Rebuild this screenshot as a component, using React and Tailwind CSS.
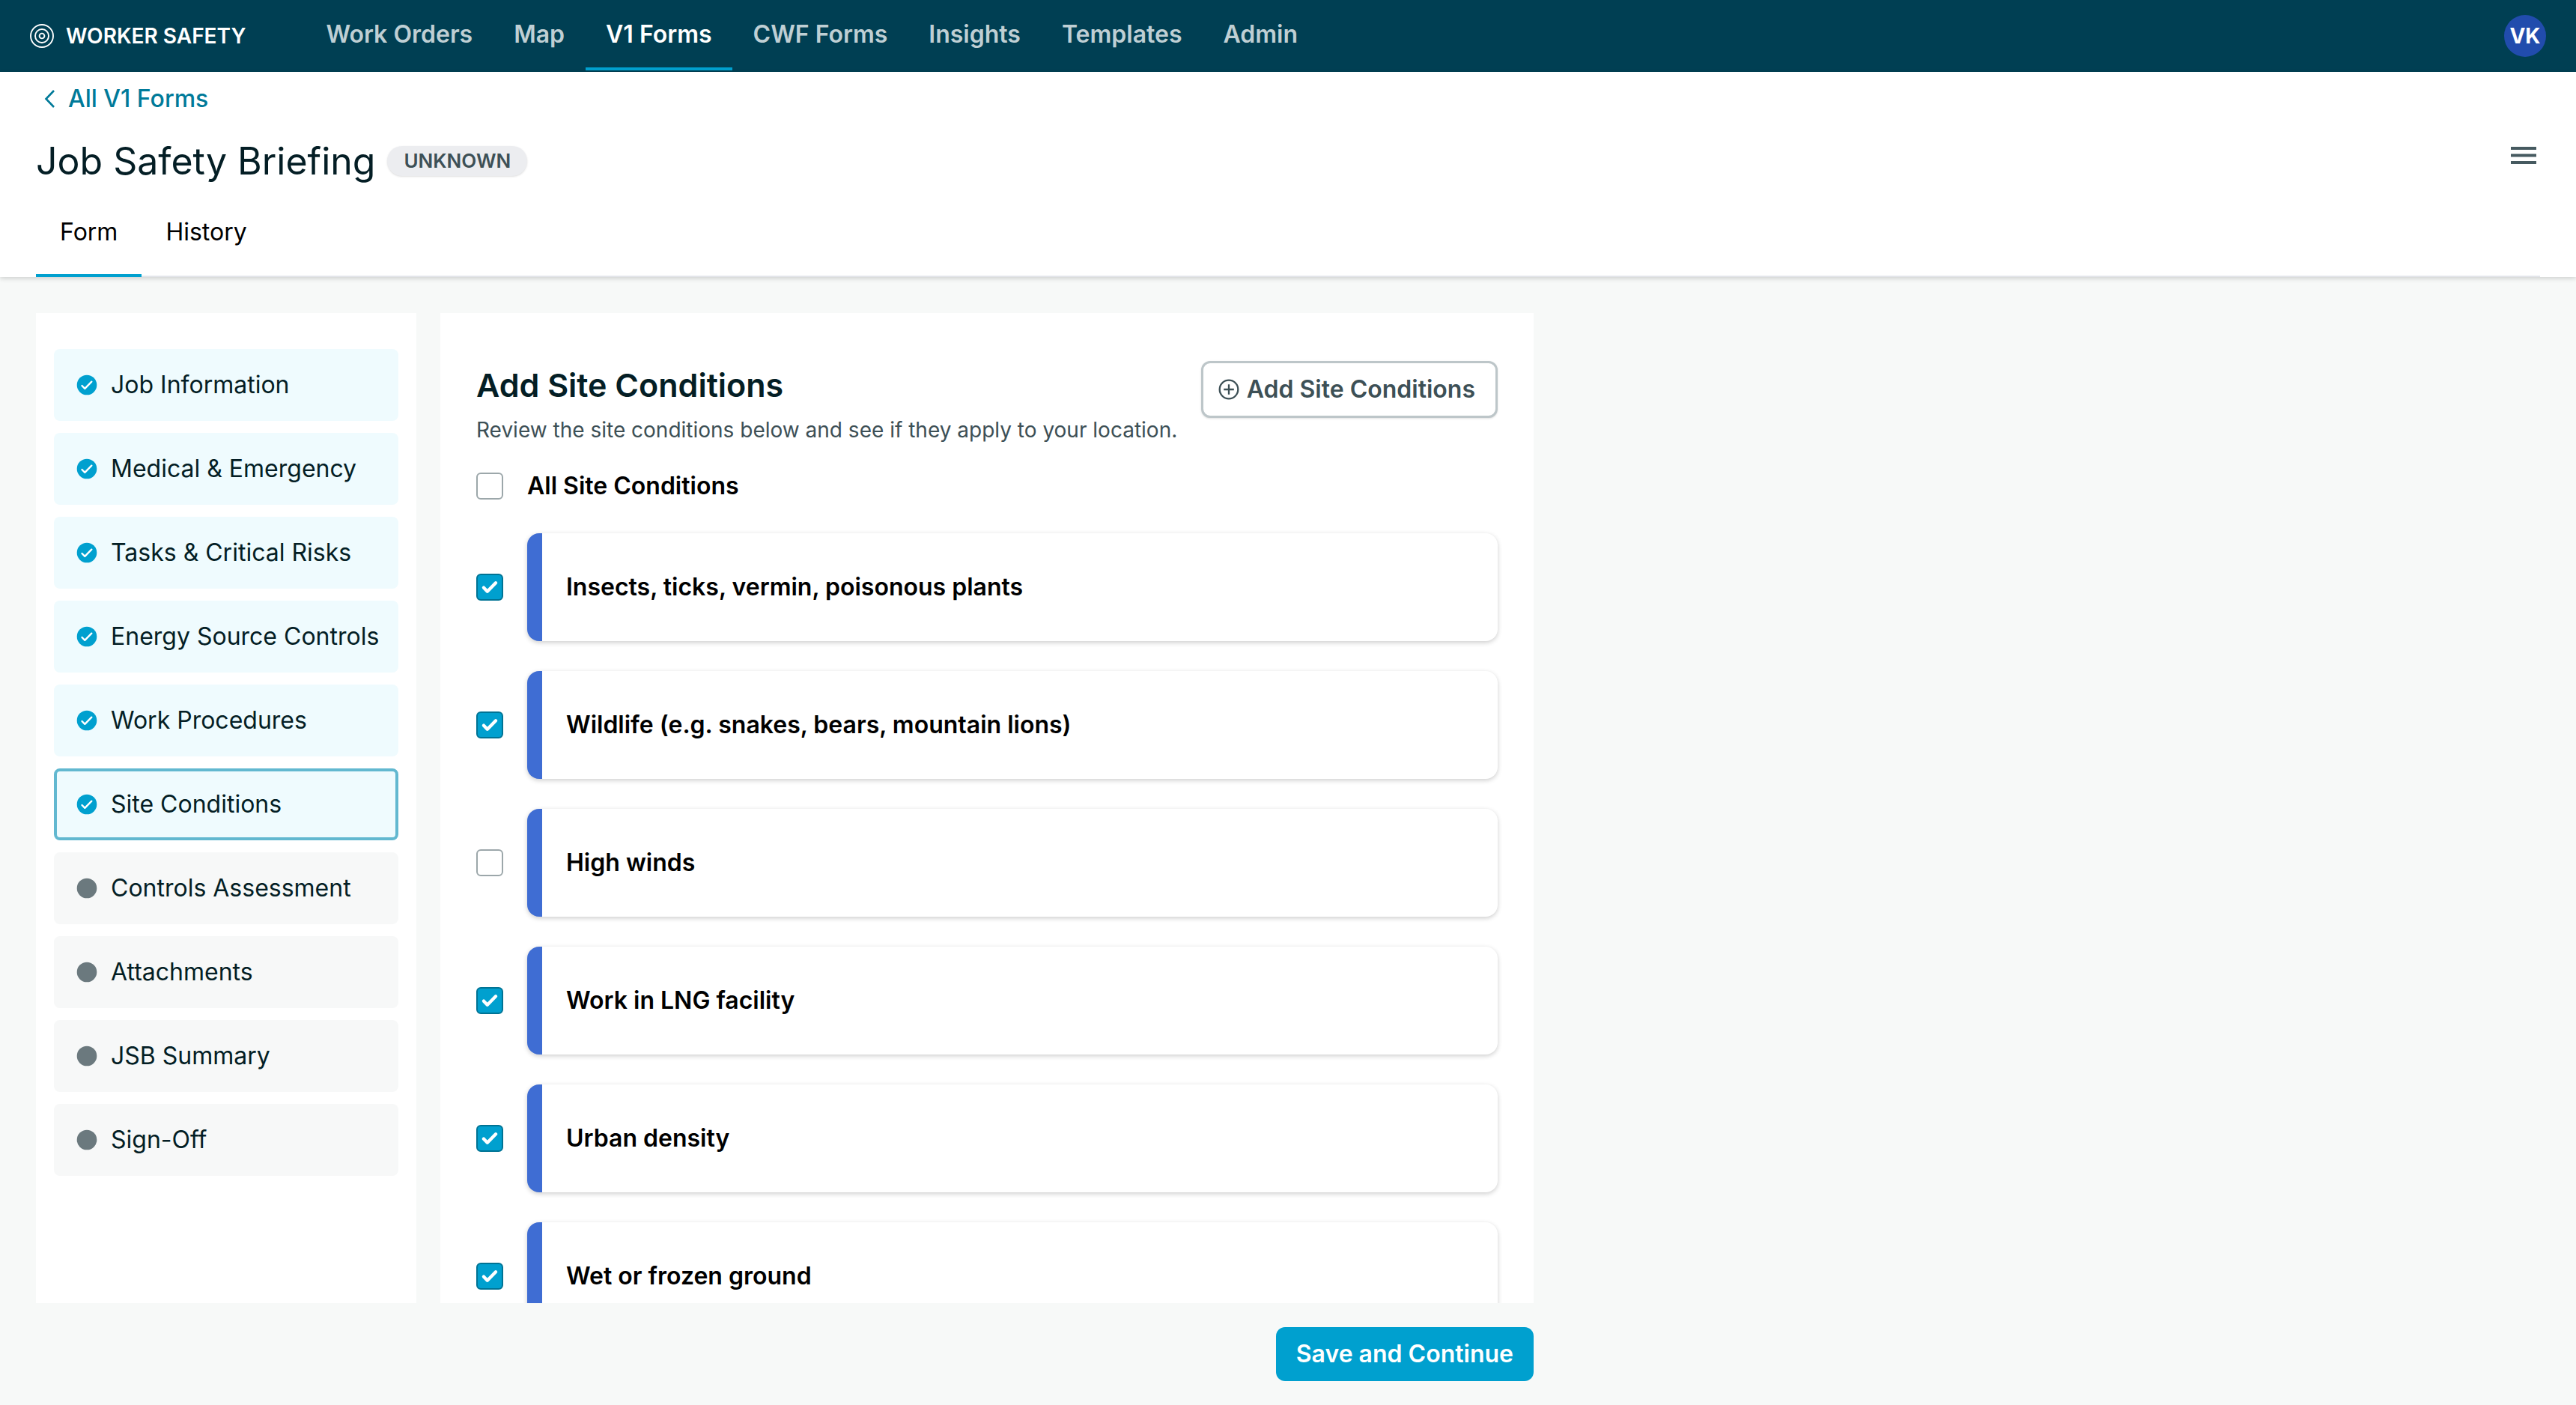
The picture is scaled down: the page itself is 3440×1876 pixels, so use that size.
import { useState } from "react";

const navItems = ["Work Orders", "Map", "V1 Forms", "CWF Forms", "Insights", "Templates", "Admin"];

const steps = [
  { label: "Job Information", done: true },
  { label: "Medical & Emergency", done: true },
  { label: "Tasks & Critical Risks", done: true },
  { label: "Energy Source Controls", done: true },
  { label: "Work Procedures", done: true },
  { label: "Site Conditions", done: true },
  { label: "Controls Assessment", done: false },
  { label: "Attachments", done: false },
  { label: "JSB Summary", done: false },
  { label: "Sign-Off", done: false },
];

const initialConditions = [
  { label: "Insects, ticks, vermin, poisonous plants", checked: true },
  { label: "Wildlife (e.g. snakes, bears, mountain lions)", checked: true },
  { label: "High winds", checked: false },
  { label: "Work in LNG facility", checked: true },
  { label: "Urban density", checked: true },
  { label: "Wet or frozen ground", checked: true },
];

function LogoIcon() {
  return (
    <svg viewBox="0 0 32 32" className="size-8" fill="none" stroke="currentColor" strokeWidth="1.9" aria-hidden="true">
      <circle cx="16" cy="16" r="15" />
      <circle cx="16" cy="16" r="9" />
      <circle cx="16" cy="16" r="3.400" />
    </svg>
  );
}

function StepIcon({ done }) {
  return (
    <svg viewBox="0 0 28 28" className="size-7 shrink-0" aria-hidden="true">
      <circle cx="14" cy="14" r="13.300" fill={done ? "#00A0CF" : "#6B797E"} />
      {done && (
        <path d="M7.500 15l3.800 3.800L20.300 9.700" fill="none" stroke="#fff" strokeWidth="2.400" strokeLinecap="round" strokeLinejoin="round" />
      )}
    </svg>
  );
}

function CheckBox({ id, checked, onChange }) {
  return (
    <span className="relative flex size-9 shrink-0">
      <input
        id={id}
        type="checkbox"
        checked={checked}
        onChange={onChange}
        className="peer size-9 cursor-pointer appearance-none rounded-[6px] border-2 border-[#9CA7AA] bg-white checked:border-[#007394] checked:bg-[#00A0CF]"
      />
      <svg
        viewBox="0 0 36 36"
        className="pointer-events-none absolute inset-0 hidden size-9 peer-checked:block"
        fill="none"
        stroke="#fff"
        strokeWidth="4.400"
        strokeLinecap="round"
        strokeLinejoin="round"
        aria-hidden="true"
      >
        <path d="M10 18.700l4.800 5L26 12.300" />
      </svg>
    </span>
  );
}

function Header() {
  return (
    <header className="flex h-24 shrink-0 items-center justify-between bg-[#003F53] px-10 text-white">
      <div className="flex h-full items-center">
        <a href="#home" className="flex items-center gap-4 text-[28px] leading-9 font-semibold">
          <LogoIcon />
          WORKER SAFETY
        </a>
        <nav className="ml-20 flex h-full gap-px">
          {navItems.map((item) => {
            const active = item === "V1 Forms";
            return (
              <a
                key={item}
                href="#nav"
                aria-current={active ? "page" : undefined}
                className={
                  active
                    ? "mb-0.5 flex items-center border-b-4 border-[#00A0CF] px-[27px] pt-0.5 text-[32px] leading-10 font-semibold"
                    : "mb-0.5 flex items-center border-b-4 border-transparent px-[27px] pt-0.5 text-[32px] leading-10 font-semibold text-[#BFCFD4]"
                }
              >
                {item}
              </a>
            );
          })}
        </nav>
      </div>
      <button type="button" className="flex size-14 items-center justify-center rounded-full bg-[#214CAD] text-[28px] font-bold">
        VK
      </button>
    </header>
  );
}

function PageHead() {
  return (
    <section className="z-10 shrink-0 bg-white px-12 shadow-[0_2px_6px_rgba(0,0,0,0.16)]">
      <a href="#forms" className="flex h-[72px] items-center gap-[18px] pl-[11px] text-[32px] leading-10 font-medium text-[#007A99]">
        <svg viewBox="0 0 14 24" className="h-6 w-3.5" fill="none" stroke="currentColor" strokeWidth="2.600" aria-hidden="true">
          <path d="M13 1L2.500 12l10.500 11" />
        </svg>
        All V1 Forms
      </a>
      <div className="flex h-[94px] items-center justify-between">
        <div className="flex items-center gap-4">
          <h1 className="text-[50px] leading-[72px] text-[#041E25]">Job Safety Briefing</h1>
          <span className="rounded-full bg-[#ECEDF0] px-[22px] py-1 text-[26px] leading-8 font-semibold text-[#3D5056] shadow-sm">UNKNOWN</span>
        </div>
        <button type="button" aria-label="Menu" className="mb-4 flex size-11 items-center justify-center text-[#465A60]">
          <svg viewBox="0 0 34 23" className="h-[23px] w-[34px]" fill="currentColor" aria-hidden="true">
            <path d="M0 0h34v4H0zM0 9.500h34v4H0zM0 19h34v4H0z" />
          </svg>
        </button>
      </div>
      <div role="tablist" className="flex h-[108px] border-b-2 border-[#E3E5EA] text-[32px] leading-10 text-black">
        <button type="button" role="tab" aria-selected="true" className="-mb-0.5 border-b-4 border-[#00A0CF] px-8 pb-2">
          Form
        </button>
        <button type="button" role="tab" aria-selected="false" className="-mb-0.5 border-b-4 border-transparent px-8 pb-2">
          History
        </button>
      </div>
    </section>
  );
}

function Sidebar() {
  return (
    <nav aria-label="Form sections" className="w-[508px] shrink-0 bg-white px-6 py-12">
      <ul className="flex flex-col gap-4">
        {steps.map(({ label, done }) => (
          <li key={label}>
            <button
              type="button"
              aria-current={label === "Site Conditions" ? "step" : undefined}
              className={
                label === "Site Conditions"
                  ? "flex h-24 w-full items-center gap-[18px] rounded-lg border-4 border-[#62B8D0] bg-[#EFFBFE] px-[26px] text-left text-[32px] leading-10 text-[#041E25]"
                  : done
                    ? "flex h-24 w-full items-center gap-[18px] rounded-lg bg-[#EFFBFE] px-[30px] text-left text-[32px] leading-10 text-[#041E25]"
                    : "flex h-24 w-full items-center gap-[18px] rounded-lg bg-[#F7F8F8] px-[30px] text-left text-[32px] leading-10 text-[#041E25]"
              }
            >
              <StepIcon done={done} />
              <span className="whitespace-nowrap">{label}</span>
            </button>
          </li>
        ))}
      </ul>
    </nav>
  );
}

export default function App() {
  const [conditions, setConditions] = useState(initialConditions);
  const all = conditions.every((c) => c.checked);
  const toggle = (i) => setConditions(conditions.map((c, n) => (n === i ? { ...c, checked: !c.checked } : c)));

  return (
    <div className="flex h-screen flex-col overflow-hidden bg-[#F7F9F8] font-['Inter',sans-serif]">
      <Header />
      <PageHead />
      <div className="flex min-h-0 w-full max-w-[2096px] flex-1 flex-col px-12 pt-12 pb-8">
        <div className="flex min-h-0 flex-1 gap-8">
          <Sidebar />
          <main className="min-w-0 flex-1 overflow-hidden bg-white px-12 pt-16">
            <div className="flex items-start justify-between">
              <div>
                <h2 className="text-[43px] leading-[64px] font-semibold text-[#041E25]">Add Site Conditions</h2>
                <p className="mt-2 text-[28px] leading-10 text-[#3D5056]">
                  Review the site conditions below and see if they apply to your location.
                </p>
              </div>
              <button
                type="button"
                className="flex h-[76px] shrink-0 items-center gap-2.5 rounded-xl border-[3px] border-[#BDC6C9] bg-white pr-[27px] pl-5 text-[32px] leading-10 font-semibold text-[#3D5056] shadow-sm"
              >
                <svg viewBox="0 0 28 28" className="size-7" fill="none" stroke="currentColor" strokeWidth="2.300" aria-hidden="true">
                  <circle cx="14" cy="14" r="12.300" />
                  <path d="M14 7.200v13.600M7.200 14h13.600" />
                </svg>
                Add Site Conditions
              </button>
            </div>
            <div className="mt-8 flex items-center gap-8">
              <CheckBox
                id="all-conditions"
                checked={all}
                onChange={() => setConditions(conditions.map((c) => ({ ...c, checked: !all })))}
              />
              <label htmlFor="all-conditions" className="text-[32px] leading-[46px] font-semibold text-black">
                All Site Conditions
              </label>
            </div>
            <ul className="mt-10 flex flex-col gap-10">
              {conditions.map(({ label, checked }, i) => (
                <li key={label} className="flex items-center gap-8">
                  <CheckBox id={`condition-${i}`} checked={checked} onChange={() => toggle(i)} />
                  <label
                    htmlFor={`condition-${i}`}
                    className="flex h-36 flex-1 items-center rounded-2xl border-l-20 border-[#3F6DD3] bg-white px-8 text-[32px] leading-10 font-semibold text-black shadow-[0_2px_6px_rgba(0,0,0,0.2)]"
                  >
                    {label}
                  </label>
                </li>
              ))}
            </ul>
          </main>
        </div>
        <footer className="mt-8 flex justify-end">
          <button type="button" className="h-[72px] rounded-xl bg-[#00A0CF] px-[27px] text-[32px] leading-10 font-semibold text-white">
            Save and Continue
          </button>
        </footer>
      </div>
    </div>
  );
}
